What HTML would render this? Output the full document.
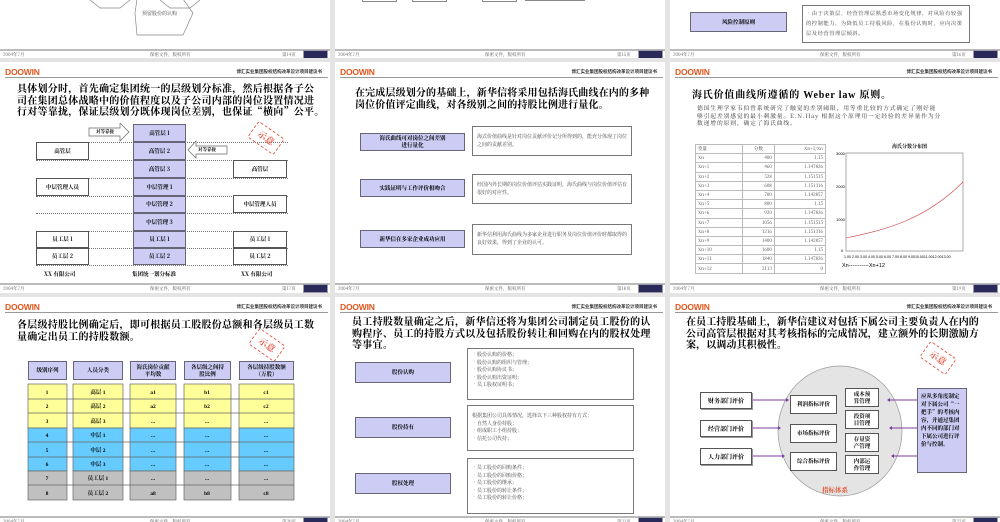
<!DOCTYPE html>
<html><head><meta charset="utf-8">
<style>
*{margin:0;padding:0;box-sizing:border-box}
body{width:1000px;height:522px;overflow:hidden;background:#e4e4e4;position:relative;font-family:"Liberation Serif","Noto Serif CJK SC",serif;color:#000}
.s{position:absolute;background:#fff;overflow:hidden}
.a{position:absolute}
.logo{position:absolute;left:5px;top:5px;font:bold 8.5px "Liberation Sans",sans-serif;color:#e2561e;letter-spacing:-0.2px}
.hd{position:absolute;right:8px;top:7px;font:bold 4.5px "Noto Sans CJK SC",sans-serif;color:#333}
.hl{position:absolute;left:5px;right:2px;top:15px;height:1px;background:#999}
.ft{position:absolute;left:0;right:0;height:10px}
.ft .l{position:absolute;left:0;right:0;top:0;height:2px;background:#bbb}
.ft span{position:absolute;top:3px;font:4.5px "Noto Serif CJK SC",serif;color:#555}
.ft .b{position:absolute;right:2px;top:1px;width:25px;height:9px;background:#2a2a5a;border:1px solid #99a}
.t{position:absolute;font-family:"Noto Serif CJK SC",serif;font-weight:700;font-size:10px;line-height:11.6px;white-space:nowrap}
.bx{position:absolute;border:1px solid #555;background:#fff;display:flex;align-items:center;justify-content:center;text-align:center;font:bold 5.5px "Noto Serif CJK SC",serif;line-height:7px}
.pu{background:#ccccf5;border-color:#667}
.sm{position:absolute;border:1px solid #777;background:#fff;font:5px "Noto Serif CJK SC",serif;color:#444;line-height:7.5px;padding:3px 4px}
.st{position:absolute;width:32px;height:20px;border:1px dashed #e05a4a;color:#e05a4a;font:bold 9px "Noto Serif CJK SC",serif;text-align:center;line-height:18px;transform:rotate(35deg);border-radius:3px}
.dl{position:absolute;height:0;border-top:1px dotted #777}
table td{border:1px solid #bbb;height:9.2px;padding:0 2px;text-align:right}
table td:first-child{text-align:left;width:47px}
</style></head><body>

<!-- Row 1 -->
<div class="s" style="left:0;top:0;width:330px;height:58px">
  <svg class="a" style="left:80px;top:0" width="130" height="40"><polyline points="10,0 20,8 40,8 50,0" fill="none" stroke="#888" stroke-width=".7"/><polyline points="120,0 110,8 90,8 80,0" fill="none" stroke="#888" stroke-width=".7"/><polygon points="57,-1 103,-1 113,13 103,35 57,35 55,13" fill="none" stroke="#888" stroke-width=".7"/></svg>
  <div class="a" style="left:142px;top:10px;font:5px 'Noto Serif CJK SC',serif;color:#444">预留股份的认购</div>
  <div class="ft" style="top:49px"><div class="l"></div><span style="left:3px">2004年7月</span><span style="left:150px">保密文件，版权所有</span><span style="left:282px">第14页</span><div class="b"></div></div>
</div>
<div class="s" style="left:335px;top:0;width:330px;height:58px">
  <div class="a" style="left:27px;top:-2px;width:35px;height:4px;border:1px solid #888"></div>
  <div class="a" style="left:77px;top:-2px;width:35px;height:4px;border:1px solid #888"></div>
  <div class="a" style="left:147px;top:-2px;width:35px;height:4px;border:1px solid #888"></div>
  <div class="a" style="left:190px;top:-2px;width:60px;height:3px;border:1px solid #888"></div>
  <div class="ft" style="top:49px"><div class="l"></div><span style="left:3px">2004年7月</span><span style="left:150px">保密文件，版权所有</span><span style="left:282px">第15页</span><div class="b"></div></div>
</div>
<div class="s" style="left:670px;top:0;width:330px;height:58px">
  <div class="bx pu" style="left:20px;top:12px;width:97px;height:20px">风险控制原则</div>
  <div class="sm" style="left:132px;top:5px;width:168px;height:38px;line-height:10px;padding:2px 3px;font-size:5.3px;letter-spacing:.5px">•由于决策层、经营管理层熟悉市场变化规律，对风险有较强的控制能力，为降低员工持股风险，在股份认购时，应向决策层及经营管理层倾斜。</div>
  <div class="ft" style="top:49px"><div class="l"></div><span style="left:3px">2004年7月</span><span style="left:150px">保密文件，版权所有</span><span style="left:282px">第16页</span><div class="b"></div></div>
</div>

<!-- Row 2 col 1 -->
<div class="s" style="left:0;top:62px;width:330px;height:231px">
  <div class="logo">DOOWIN</div><div class="hd">博汇实业集团股权结构改革设计项目建议书</div><div class="hl"></div>
  <div class="t" style="left:17px;top:20px;letter-spacing:.25px">具体划分时，首先确定集团统一的层级划分标准，然后根据各子公<br>司在集团总体战略中的价值程度以及子公司内部的岗位设置情况进<br>行对等靠拢，保证层级划分既体现岗位差别，也保证“横向”公平。</div>
  <div class="dl" style="left:36px;width:252px;top:80px"></div>
  <div class="dl" style="left:36px;width:252px;top:98px"></div>
  <div class="dl" style="left:36px;width:252px;top:116px"></div>
  <div class="dl" style="left:36px;width:252px;top:134px"></div>
  <div class="dl" style="left:36px;width:252px;top:151px"></div>
  <div class="dl" style="left:36px;width:252px;top:169px"></div>
  <div class="dl" style="left:36px;width:252px;top:186px"></div>
  <div class="dl" style="left:36px;width:252px;top:203px"></div>
  <div class="bx pu" style="left:133px;top:62px;width:53px;height:18px">高管层 1</div>
  <div class="bx pu" style="left:133px;top:80px;width:53px;height:18px">高管层 2</div>
  <div class="bx pu" style="left:133px;top:98px;width:53px;height:18px">高管层 3</div>
  <div class="bx pu" style="left:133px;top:116px;width:53px;height:18px">中层管理 1</div>
  <div class="bx pu" style="left:133px;top:134px;width:53px;height:17px">中层管理 2</div>
  <div class="bx pu" style="left:133px;top:151px;width:53px;height:18px">中层管理 3</div>
  <div class="bx pu" style="left:133px;top:169px;width:53px;height:17px">员工层 1</div>
  <div class="bx pu" style="left:133px;top:186px;width:53px;height:17px">员工层 2</div>
  <div class="bx" style="left:36px;top:80px;width:53px;height:18px">高管层</div>
  <div class="bx" style="left:36px;top:116px;width:53px;height:18px">中层管理人员</div>
  <div class="bx" style="left:36px;top:169px;width:53px;height:17px">员工层 1</div>
  <div class="bx" style="left:36px;top:186px;width:53px;height:17px">员工层 2</div>
  <div class="bx" style="left:233px;top:98px;width:54px;height:18px;border-width:1.5px">高管层</div>
  <div class="bx" style="left:233px;top:133px;width:54px;height:18px">中层管理人员</div>
  <div class="bx" style="left:233px;top:169px;width:54px;height:17px">员工层 1</div>
  <div class="bx" style="left:233px;top:186px;width:54px;height:17px">员工层 2</div>
  <svg class="a" style="left:88px;top:61px" width="145" height="40"><polygon points="1,5 32,5 32,0 41,9 32,18 32,13 1,13" fill="#fff" stroke="#666" stroke-width=".7"/><polygon points="139,23 108,23 108,18 100,27 108,35 108,31 139,31" fill="#fff" stroke="#666" stroke-width=".7"/></svg>
  <div class="a" style="left:96px;top:67px;font:bold 4.5px 'Noto Serif CJK SC',serif">对等靠拢</div>
  <div class="a" style="left:198px;top:85px;font:bold 4.5px 'Noto Serif CJK SC',serif">对等靠拢</div>
  <div class="st" style="left:250px;top:66px">示意</div>
  <div class="a" style="left:44px;top:208px;font:bold 5.5px 'Noto Serif CJK SC',serif">XX 有限公司</div>
  <div class="a" style="left:132px;top:208px;font:bold 5.5px 'Noto Serif CJK SC',serif">集团统一划分标准</div>
  <div class="a" style="left:241px;top:208px;font:bold 5.5px 'Noto Serif CJK SC',serif">XX 有限公司</div>
  <div class="ft" style="top:221px"><div class="l"></div><span style="left:3px">2004年7月</span><span style="left:150px">保密文件，版权所有</span><span style="left:282px">第17页</span><div class="b"></div></div>
</div>

<!-- Row 2 col 2 -->
<div class="s" style="left:335px;top:62px;width:330px;height:231px">
  <div class="logo">DOOWIN</div><div class="hd">博汇实业集团股权结构改革设计项目建议书</div><div class="hl"></div>
  <div class="t" style="left:20px;top:24px;letter-spacing:.15px">在完成层级划分的基础上，新华信将采用包括海氏曲线在内的多种<br>岗位价值评定曲线，对各级别之间的持股比例进行量化。</div>
  <div class="bx pu" style="left:25px;top:71px;width:105px;height:18px">海氏曲线可对岗位之间差别<br>进行量化</div>
  <div class="sm" style="left:137px;top:64px;width:160px;height:30px;padding-top:6px">海式价值曲线是针对岗位贡献评价记分所得到的，能充分体现了岗位之间的贡献差别。</div>
  <div class="bx pu" style="left:25px;top:117px;width:105px;height:18px">实践证明与工作评价相吻合</div>
  <div class="sm" style="left:137px;top:112px;width:160px;height:30px;padding-top:6px">经国内外长期的岗位价值评估实践证明，海氏曲线与岗位价值评估有很好的对应性。</div>
  <div class="bx pu" style="left:25px;top:168px;width:105px;height:18px">新华信在多家企业成功应用</div>
  <div class="sm" style="left:137px;top:162px;width:160px;height:31px;padding-top:6px">新华信利用海氏曲线为多家企业进行职务及岗位价值评价时都取得的良好效果，得到了企业的认可。</div>
  <div class="ft" style="top:221px"><div class="l"></div><span style="left:3px">2004年7月</span><span style="left:150px">保密文件，版权所有</span><span style="left:282px">第18页</span><div class="b"></div></div>
</div>

<!-- Row 2 col 3 -->
<div class="s" style="left:670px;top:62px;width:330px;height:231px">
  <div class="logo">DOOWIN</div><div class="hd">博汇实业集团股权结构改革设计项目建议书</div><div class="hl"></div>
  <div class="a" style="left:22px;top:24px;font:700 10px 'Liberation Serif','Noto Serif CJK SC',serif;letter-spacing:.8px">海氏价值曲线所遵循的 Weber law 原则。</div>
  <div class="a" style="left:27px;top:42px;white-space:nowrap;font:5.8px 'Noto Serif CJK SC',serif;line-height:7.5px;color:#333;letter-spacing:.85px">德国生理学家韦伯曾系统研究了触觉的差别阈限，用等重比较的方式确定了刚好能<br>够引起差别感觉的最小刺激量。E.N.Hay 根据这个原理用一定经验的差异量作为分<br>数递增的原则，确定了海氏曲线。</div>
  <table class="a" style="left:25px;top:82px;width:131px;border-collapse:collapse;font:4.5px 'Noto Serif CJK SC',serif;color:#444">
  <tr><td>变量</td><td style="text-align:center">分数</td><td>Xn+1/Xn</td></tr>
  <tr><td>Xn</td><td>400</td><td>1.15</td></tr><tr><td>Xn+1</td><td>460</td><td>1.147826</td></tr><tr><td>Xn+2</td><td>528</td><td>1.151515</td></tr><tr><td>Xn+3</td><td>608</td><td>1.151316</td></tr><tr><td>Xn+4</td><td>700</td><td>1.142857</td></tr><tr><td>Xn+5</td><td>800</td><td>1.15</td></tr><tr><td>Xn+6</td><td>920</td><td>1.147826</td></tr><tr><td>Xn+7</td><td>1056</td><td>1.151515</td></tr><tr><td>Xn+8</td><td>1216</td><td>1.151316</td></tr><tr><td>Xn+9</td><td>1400</td><td>1.142857</td></tr><tr><td>Xn+10</td><td>1600</td><td>1.15</td></tr><tr><td>Xn+11</td><td>1840</td><td>1.147826</td></tr><tr><td>Xn+12</td><td>2113</td><td>0</td></tr>
  </table>
  <div class="a" style="left:222px;top:81px;font:bold 5px 'Noto Serif CJK SC',serif">海氏分数分布图</div>
  <svg class="a" style="left:165px;top:88px" width="135" height="110">
    <rect x="11" y="3" width="117" height="98" fill="#fff" stroke="#888" stroke-width=".7"/>
    <text x="1" y="5" font-size="4" font-family="Liberation Sans">3000</text>
    <text x="1" y="38" font-size="4" font-family="Liberation Sans">2000</text>
    <text x="1" y="71" font-size="4" font-family="Liberation Sans">1000</text>
    <text x="6" y="102" font-size="4" font-family="Liberation Sans">0</text>
    <path d="M11,88 C50,80 90,70 128,32" fill="none" stroke="#d04040" stroke-width=".6"/>
    <text x="9" y="108" font-size="3.6" font-family="Liberation Sans">1.00 2.00 3.00 4.00 5.00 6.00 7.00 8.00 9.0010.0011.0012.0013.00</text>
  </svg>
  <div class="a" style="left:172px;top:201px;font:5.5px 'Liberation Sans',sans-serif">Xn-----------Xn+12</div>
  <div class="ft" style="top:221px"><div class="l"></div><span style="left:3px">2004年7月</span><span style="left:150px">保密文件，版权所有</span><span style="left:282px">第19页</span><div class="b"></div></div>
</div>

<!-- Row 3 col 1 -->
<div class="s" style="left:0;top:297px;width:330px;height:225px">
  <div class="logo">DOOWIN</div><div class="hd">博汇实业集团股权结构改革设计项目建议书</div><div class="hl"></div>
  <div class="t" style="left:17px;top:21px;letter-spacing:.25px">各层级持股比例确定后，即可根据员工股股份总额和各层级员工数<br>量确定出员工的持股数额。</div>
  <div class="st" style="left:251px;top:38px">示意</div>
  <div class="bx pu" style="left:28px;top:64px;width:39px;height:19px">级别序列</div>
  <div class="bx pu" style="left:73px;top:64px;width:50px;height:19px">人员分类</div>
  <div class="bx pu" style="left:130px;top:64px;width:46px;height:19px">海氏岗位贡献<br>平均数</div>
  <div class="bx pu" style="left:184px;top:64px;width:47px;height:19px">各层级之间持<br>股比例</div>
  <div class="bx pu" style="left:239px;top:64px;width:55px;height:19px">各层级持股数额<br>（万股）</div>
  <svg class="a" style="left:0;top:0" width="330" height="225" font-family="Liberation Serif,Noto Serif CJK SC,serif" font-size="5.5" font-weight="bold" text-anchor="middle">
  <g stroke="#666" stroke-width=".7">
  <g fill="#ffff99"><rect x="28" y="87" width="39" height="44"/><rect x="73" y="87" width="50" height="44"/><rect x="130" y="87" width="46" height="44"/><rect x="184" y="87" width="47" height="44"/><rect x="239" y="87" width="55" height="44"/></g>
  <g fill="#66ccff"><rect x="28" y="131" width="39" height="43"/><rect x="73" y="131" width="50" height="43"/><rect x="130" y="131" width="46" height="43"/><rect x="184" y="131" width="47" height="43"/><rect x="239" y="131" width="55" height="43"/></g>
  <g fill="#c0c0c0"><rect x="28" y="174" width="39" height="29"/><rect x="73" y="174" width="50" height="29"/><rect x="130" y="174" width="46" height="29"/><rect x="184" y="174" width="47" height="29"/><rect x="239" y="174" width="55" height="29"/></g>
  <path d="M28,102H294M28,116H294M28,145H294M28,160H294M28,188H294" fill="none"/>
  </g>
  <g fill="#000">
  <text x="47" y="97">1</text><text x="98" y="97">高层 1</text><text x="153" y="97">a1</text><text x="207" y="97">b1</text><text x="266" y="97">c1</text>
  <text x="47" y="111">2</text><text x="98" y="111">高层 2</text><text x="153" y="111">a2</text><text x="207" y="111">b2</text><text x="266" y="111">c2</text>
  <text x="47" y="126">3</text><text x="98" y="126">高层 3</text><text x="153" y="126">...</text><text x="207" y="126">...</text><text x="266" y="126">...</text>
  <text x="47" y="140">4</text><text x="98" y="140">中层 1</text><text x="153" y="140">...</text><text x="207" y="140">...</text><text x="266" y="140">...</text>
  <text x="47" y="155">5</text><text x="98" y="155">中层 2</text><text x="153" y="155">...</text><text x="207" y="155">...</text><text x="266" y="155">...</text>
  <text x="47" y="169">6</text><text x="98" y="169">中层 3</text><text x="153" y="169">...</text><text x="207" y="169">...</text><text x="266" y="169">...</text>
  <text x="47" y="183">7</text><text x="98" y="183">员工层 1</text><text x="153" y="183">...</text><text x="207" y="183">...</text><text x="266" y="183">...</text>
  <text x="47" y="198">8</text><text x="98" y="198">员工层 2</text><text x="153" y="198">a8</text><text x="207" y="198">b8</text><text x="266" y="198">c8</text>
  </g></svg>
  <div class="ft" style="top:219px"><div class="l"></div><span style="left:3px">2004年7月</span><span style="left:150px">保密文件，版权所有</span><span style="left:282px">第20页</span><div class="b"></div></div>
</div>

<!-- Row 3 col 2 -->
<div class="s" style="left:335px;top:297px;width:330px;height:225px">
  <div class="logo">DOOWIN</div><div class="hd">博汇实业集团股权结构改革设计项目建议书</div><div class="hl"></div>
  <div class="t" style="left:17px;top:18px;letter-spacing:.3px">员工持股数量确定之后，新华信还将为集团公司制定员工股份的认<br>购程序、员工的持股方式以及包括股份转让和回购在内的股权处理<br>等事宜。</div>
  <div class="bx pu" style="left:20px;top:65px;width:96px;height:21px">股份认购</div>
  <div class="sm" style="left:132px;top:51px;width:167px;height:52px;padding:2px 4px">•股份认购的价格；<br>•股份认购的组织与管理；<br>•股份认购协议书；<br>•股份认购出资证明；<br>•员工股权证明书；</div>
  <div class="bx pu" style="left:20px;top:120px;width:96px;height:21px">股份持有</div>
  <div class="sm" style="left:132px;top:108px;width:167px;height:46px;padding:6px 4px 2px">根据集团公司具体情况，选择以下三种股权持有方式：<br>•自然人身份持股；<br>•组成职工小组持股；<br>•信托公司代持；</div>
  <div class="bx pu" style="left:20px;top:176px;width:96px;height:21px">股权处理</div>
  <div class="sm" style="left:132px;top:161px;width:167px;height:56px;padding:5px 4px 2px">•员工股份的回购条件；<br>•员工股份的回购价格；<br>•员工股份的继承；<br>•员工股份的转让条件；<br>•员工股份的转让价格；</div>
  <div class="ft" style="top:219px"><div class="l"></div><span style="left:3px">2004年7月</span><span style="left:150px">保密文件，版权所有</span><span style="left:282px">第21页</span><div class="b"></div></div>
</div>

<!-- Row 3 col 3 -->
<div class="s" style="left:670px;top:297px;width:330px;height:225px">
  <div class="logo">DOOWIN</div><div class="hd">博汇实业集团股权结构改革设计项目建议书</div><div class="hl"></div>
  <div class="t" style="left:16px;top:18px;letter-spacing:.1px">在员工持股基础上，新华信建议对包括下属公司主要负责人在内的<br>公司高管层根据对其考核指标的完成情况，建立额外的长期激励方<br>案，以调动其积极性。</div>
  <div class="st" style="left:252px;top:51px">示意</div>
  <svg class="a" style="left:0;top:0" width="330" height="225">
    <ellipse cx="170" cy="134" rx="62" ry="65" fill="#e4e4e4" stroke="#999" stroke-width=".7"/>
    <g stroke="#7a3fa0" stroke-width="1"><path d="M82,103H116M82,131H108M82,159H112M250,103H220M250,131H222M250,159H224"/></g>
    <g fill="#7a3fa0"><path d="M116,101l3,2l-3,2z M108,129l3,2l-3,2z M112,157l3,2l-3,2z M220,101l-3,2l3,2z M222,129l-3,2l3,2z M224,157l-3,2l3,2z"/></g>
  </svg>
  <div class="bx" style="left:30px;top:95px;width:52px;height:17px;font-size:6px;box-shadow:1px 1px 0 #999">财务部门评价</div>
  <div class="bx" style="left:30px;top:123px;width:52px;height:17px;font-size:6px;box-shadow:1px 1px 0 #999">经营部门评价</div>
  <div class="bx" style="left:30px;top:151px;width:52px;height:17px;font-size:6px;box-shadow:1px 1px 0 #999">人力部门评价</div>
  <div class="bx" style="left:120px;top:98px;width:47px;height:19px">利润指标评价</div>
  <div class="bx" style="left:120px;top:127px;width:47px;height:19px">市场指标评价</div>
  <div class="bx" style="left:120px;top:155px;width:47px;height:19px">综合指标评价</div>
  <div class="bx" style="left:175px;top:91px;width:34px;height:19px">成本预<br>算管理</div>
  <div class="bx" style="left:175px;top:113px;width:34px;height:19px">投资项<br>目管理</div>
  <div class="bx" style="left:175px;top:136px;width:34px;height:19px">存量资<br>产管理</div>
  <div class="bx" style="left:175px;top:158px;width:34px;height:19px">内部运<br>作管理</div>
  <div class="bx pu" style="left:247px;top:91px;width:50px;height:85px;align-items:flex-start;text-align:left;padding:3px;line-height:8px;font-size:5.5px">应从多角度制定对下属公司“一把手”的考核内容，并通过集团内不同的部门对下属公司进行评价与控制。</div>
  <div class="a" style="left:152px;top:188px;font:bold 6.5px 'Noto Serif CJK SC',serif;color:#e05030">指标体系</div>
  <div class="ft" style="top:219px"><div class="l"></div><span style="left:3px">2004年7月</span><span style="left:150px">保密文件，版权所有</span><span style="left:282px">第22页</span><div class="b"></div></div>
</div>
</body></html>
